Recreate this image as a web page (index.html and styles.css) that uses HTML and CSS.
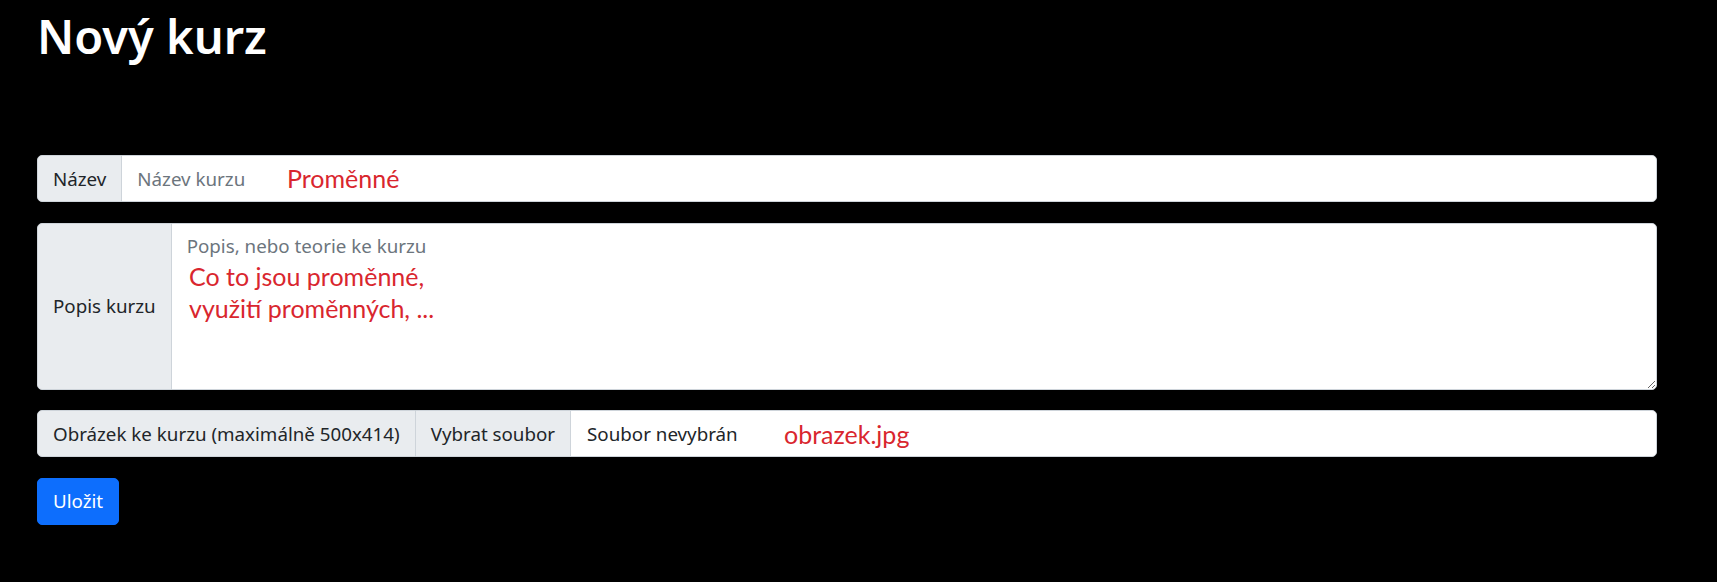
FILE: index.html
```html
<!DOCTYPE html>
<html lang="cs">
<head>
<meta charset="utf-8">
<title>Nový kurz</title>
<link rel="stylesheet" href="styles.css">
</head>
<body>
<main class="page">
  <h1 class="title">Nový kurz</h1>
  <form class="form">
    <div class="group">
      <span class="addon">Název</span>
      <input class="control" type="text" placeholder="Název kurzu">
      <span class="note note-name">Proměnné</span>
    </div>
    <div class="group group-tall">
      <span class="addon">Popis kurzu</span>
      <textarea class="control area" rows="5" placeholder="Popis, nebo teorie ke kurzu"></textarea>
      <span class="note note-desc">Co to jsou proměnné,<br>využití proměnných, ...</span>
    </div>
    <div class="group">
      <span class="addon">Obrázek ke kurzu (maximálně 500x414)</span>
      <div class="control file">
        <span class="file-btn">Vybrat soubor</span>
        <span class="file-name">Soubor nevybrán</span>
      </div>
      <span class="note note-file">obrazek.jpg</span>
    </div>
    <button class="btn" type="button">Uložit</button>
  </form>
</main>
</body>
</html>
```
FILE: styles.css
```css
* { box-sizing: border-box; }
html, body { margin: 0; background: #000; }
body {
  font-family: "Noto Sans", "Open Sans", sans-serif;
  font-size: 18.75px;
  line-height: 30px;
  color: #212529;
  width: 1717px;
  height: 582px;
  overflow: hidden;
}
.page {
  padding: 8px 60px 0 37px;
}
.title {
  margin: 0;
  font-size: 47px;
  font-weight: 600;
  line-height: 56px;
  color: #fff;
}
.form {
  margin-top: 91px;
  display: flex;
  flex-direction: column;
  align-items: flex-start;
  gap: 20.5px;
}
.group {
  position: relative;
  display: flex;
  align-items: stretch;
  width: 100%;
}
.addon {
  display: flex;
  align-items: center;
  padding: 7.5px 15px;
  background: #e9ecef;
  border: 1px solid #ced4da;
  border-radius: 5px 0 0 5px;
  white-space: nowrap;
  color: #212529;
}
.control {
  flex: 1 1 auto;
  min-width: 0;
  margin-left: -1px;
  padding: 7.5px 15px;
  font: inherit;
  color: #212529;
  background: #fff;
  border: 1px solid #ced4da;
  border-radius: 0 5px 5px 0;
  outline: none;
}
.control::placeholder { color: #6c757d; opacity: 1; }
.area {
  height: 167px;
  resize: vertical;
}
.file {
  display: flex;
  align-items: stretch;
  padding: 0;
  overflow: hidden;
}
.file-btn {
  padding: 7.5px 15px;
  background: #e9ecef;
  border-right: 1px solid #ced4da;
}
.file-name {
  padding: 7.5px 16px;
}
.note {
  position: absolute;
  font-family: Lato, "Open Sans", sans-serif;
  font-size: 25px;
  line-height: 24px;
  color: #d9262e;
  pointer-events: none;
}
.note-name { left: 250px; top: 11px; }
.note-desc { left: 152px; top: 37px; line-height: 32px; }
.note-file { left: 747px; top: 12px; }
.btn {
  font: inherit;
  color: #fff;
  background: #0d6efd;
  border: 1px solid #0d6efd;
  border-radius: 5px;
  padding: 7.5px 15px;
  cursor: pointer;
}
```
